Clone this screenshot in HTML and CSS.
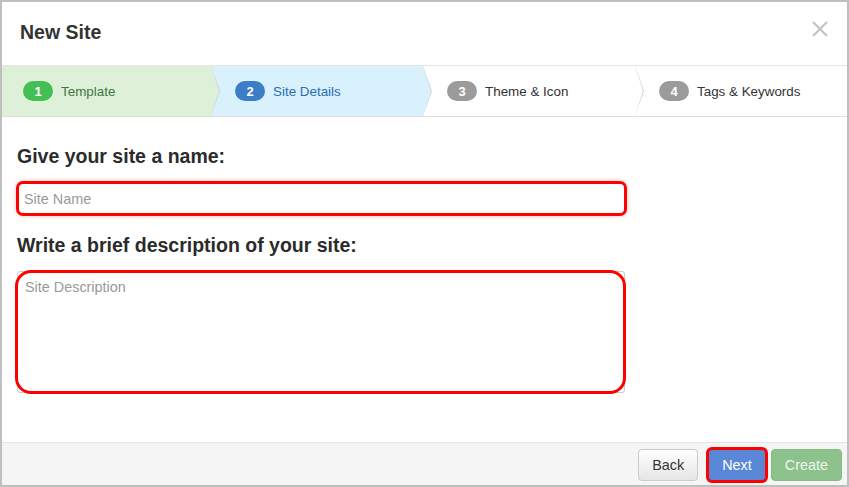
FILE: index.html
```html
<!doctype html>
<html lang="en">
    <head>
        <meta charset="utf-8">
        <title>New Site</title>
        <link rel="stylesheet" href="styles.css">
    </head>
    <body>
        <div class="modal">
            <div class="modal-header">
                <h4 class="modal-title">New Site</h4>
                <button class="close" type="button" aria-label="Close">
                    <svg width="16" height="16" viewBox="0 0 16 16"><path d="M1 1L15 15M15 1L1 15" stroke="#c4c4c4" stroke-width="2.2" fill="none"/></svg>
                </button>
            </div>
            <div class="steps">
                <div class="step done"><span class="badge">1</span><span class="step-label">Template</span></div>
                <div class="step active"><span class="badge">2</span><span class="step-label">Site Details</span></div>
                <div class="step"><span class="badge">3</span><span class="step-label">Theme &amp; Icon</span></div>
                <div class="step last"><span class="badge">4</span><span class="step-label">Tags &amp; Keywords</span></div>
            </div>
            <div class="modal-body">
                <label class="field-label" for="sitename">Give your site a name:</label>
                <input id="sitename" class="site-name" type="text" placeholder="Site Name">
                <label class="field-label second" for="sitedesc">Write a brief description of your site:</label>
                <div class="desc-wrap">
                    <textarea id="sitedesc" placeholder="Site Description"></textarea>
                </div>
            </div>
            <div class="modal-footer">
                <button class="btn btn-back" type="button">Back</button>
                <button class="btn btn-next" type="button">Next</button>
                <button class="btn btn-create" type="button">Create</button>
            </div>
        </div>
    </body>
</html>
```
FILE: styles.css
```css
html, body { margin: 0; height: 100%; }
body { font-family: "Liberation Sans", Arial, sans-serif; color: #333; background: #fff; }
.modal { box-sizing: border-box; width: 849px; height: 487px; border: 2px solid #bfbfbf; display: flex; flex-direction: column; background: #fff; }

/*Header*/
.modal-header { height: 63px; border-bottom: 1px solid #e5e5e5; display: flex; align-items: center; justify-content: space-between; padding: 0 19px 0 18px; }
.modal-title { margin: 0 0 2px; font-size: 19.5px; font-weight: bold; color: #333; }
.close { border: 0; background: transparent; padding: 0; margin-bottom: 9px; width: 16px; height: 16px; display: flex; }

/*Steps*/
.steps { display: flex; height: 50px; border-bottom: 1px solid #ddd; }
.step { flex: 1; position: relative; display: flex; align-items: center; gap: 8px; padding-left: 24px; font-size: 13.4px; color: #333; background: #fff; }
.step:first-child { flex: 0 0 209px; box-sizing: border-box; padding-left: 21px; }
.step::before, .step::after { content: ""; position: absolute; top: 0; bottom: 0; z-index: 1; clip-path: polygon(0 0, 100% 50%, 0 100%); }
.step::before { left: 100%; width: 9px; background: #cfcfcf; }
.step::after { left: 100%; width: 8px; background: inherit; }
.step.last::before, .step.last::after { display: none; }
.step .badge { width: 30px; height: 20px; border-radius: 10px; background: #9b9b9b; color: #fff; font-size: 13px; font-weight: bold; display: flex; align-items: center; justify-content: center; }
.step.done { background: #dff0d8; color: #3c763d; }
.step.done .badge { background: #44bf55; }
.step.active { background: #d8f1fd; color: #2a6eb4; }
.step.active .badge { background: #3c7ec6; }

/*Body*/
.modal-body { flex: 1; padding: 28px 15px 0; }
.field-label { display: block; margin: 0 0 13px; font-size: 19.5px; line-height: 23px; font-weight: bold; color: #2b2b2b; }
.field-label.second { margin-top: 18px; margin-bottom: 14px; }
.site-name {
    display: block;
    box-sizing: border-box;
    width: 611px;
    height: 35px;
    margin: 0 0 0 -1px;
    padding: 0 5px;
    border: 3px solid #f00;
    border-radius: 7px;
    box-shadow: 0 0 5px rgba(255, 0, 0, 0.25);
    font-family: inherit;
    font-size: 14.4px;
    color: #555;
    outline: none;
}
.site-name::placeholder, .desc-wrap textarea::placeholder { color: #999; }
.desc-wrap { position: relative; width: 608px; height: 122px; }
.desc-wrap textarea {
    box-sizing: border-box;
    width: 100%;
    height: 100%;
    margin: 0;
    padding: 5px 7px;
    border: 1px solid #ccc;
    border-radius: 3px;
    resize: none;
    font-family: inherit;
    font-size: 14.4px;
    line-height: 20px;
    outline: none;
}
.desc-wrap::after { content: ""; position: absolute; top: -1px; left: -2px; right: -1px; bottom: -1px; border: 3px solid #f00; border-radius: 16px; pointer-events: none; }

/*Footer*/
.modal-footer { height: 43px; box-sizing: border-box; border-top: 1px solid #e5e5e5; background: #f5f5f5; display: flex; justify-content: flex-end; align-items: flex-start; padding: 6px 5px 0 0; }
.btn { box-sizing: border-box; height: 32px; padding: 0 13px; border: 1px solid transparent; border-radius: 4px; font-family: inherit; font-size: 14.4px; line-height: 30px; }
.btn-back { background: linear-gradient(#fff, #e6e6e6); border-color: #ccc; color: #333; }
.btn-next { margin-left: 10px; background: #5a88d9; border-color: #f00; box-shadow: 0 0 0 2px #f00; color: #fff; }
.btn-create { margin-left: 5px; background: #8dc28d; border-color: #86bb86; color: #eef7ee; }
```
